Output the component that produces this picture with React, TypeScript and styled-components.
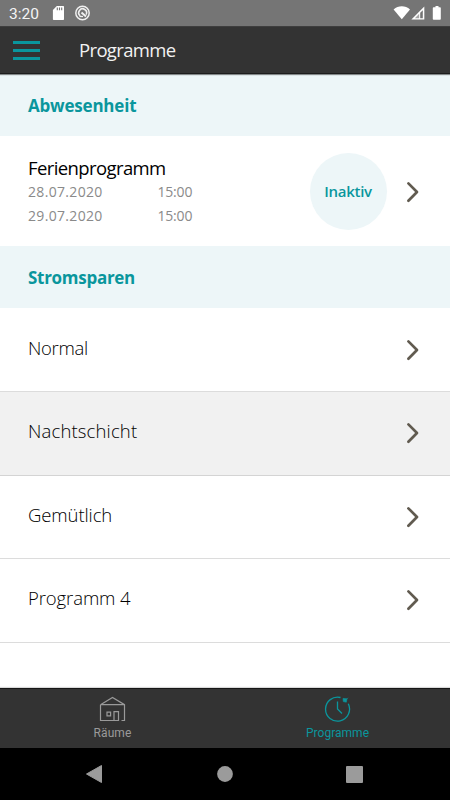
import React from "react";
import styled, { createGlobalStyle } from "styled-components";

const GlobalStyle = createGlobalStyle`
  * { box-sizing: border-box; }
  body { margin: 0; background: #fff; }
`;

const TEAL = "#0a969d";

const Screen = styled.div`
  width: 450px;
  height: 800px;
  display: flex;
  flex-direction: column;
  overflow: hidden;
  background: #fff;
  font-family: "Open Sans", "Noto Sans", sans-serif;
`;

const StatusBar = styled.div`
  flex: none;
  height: 26px;
  padding: 0 8px 0 9px;
  display: flex;
  align-items: center;
  justify-content: space-between;
  background: #757575;
`;

const StatusGroup = styled.div`
  display: flex;
  align-items: center;
  height: 26px;
`;

const Clock = styled.span`
  width: 43px;
  font: 400 15.5px/26px Roboto, sans-serif;
  padding-top: 1px;
  color: #f4f4f4;
`;

const Header = styled.header`
  flex: none;
  height: 48px;
  padding-left: 13px;
  display: flex;
  align-items: center;
  background: #333;
  border-top: 1px solid #3e3e3e;
  border-bottom: 1px solid #1d1d1d;
  box-shadow: 0 1px 1px rgba(0, 0, 0, 0.45);
  z-index: 1;
`;

const MenuButton = styled.button`
  width: 27px;
  height: 19px;
  margin: 1px 39px 0 0;
  padding: 0;
  border: 0;
  background: none;
  display: flex;
  flex-direction: column;
  justify-content: space-between;
`;

const MenuLine = styled.span`
  width: 27px;
  height: 3px;
  background: ${TEAL};
`;

const Label = styled.span<{ $size: number; $spacing: number; $weight?: number; $color?: string }>`
  display: block;
  white-space: nowrap;
  line-height: 24px;
  font-size: ${(p) => p.$size}px;
  letter-spacing: ${(p) => p.$spacing}px;
  font-weight: ${(p) => p.$weight ?? 400};
  color: ${(p) => p.$color ?? "#000"};
`;

const SectionHeader = styled.h2`
  flex: none;
  height: 62px;
  margin: 0;
  padding: 1px 28px 0;
  display: flex;
  align-items: center;
  background: #edf6f8;
`;

const HolidayRow = styled.div`
  flex: none;
  height: 110px;
  padding: 0 30px 0 28px;
  display: flex;
  align-items: center;
`;

const HolidayInfo = styled.div`
  width: 281.5px;
  margin-top: 2px;
`;

const DateLine = styled.div`
  display: grid;
  grid-template-columns: 129.5px auto;
`;

const StatusBubble = styled.div`
  width: 77px;
  height: 77px;
  border-radius: 50%;
  display: flex;
  align-items: center;
  justify-content: center;
  background: #edf6f8;
`;

const ProgramRow = styled.div<{ $height: number; $selected?: boolean }>`
  flex: none;
  height: ${(p) => p.$height}px;
  padding: 0 30px 0 28px;
  display: flex;
  align-items: center;
  justify-content: space-between;
  border-bottom: 1px solid ${(p) => (p.$selected ? "#d4d4d4" : "#dcdcdc")};
  background: ${(p) => (p.$selected ? "#f1f1f1" : "#fff")};
  > span { margin-top: -3px; }
  & + & { padding-bottom: 2px; }
`;

const ChevronIcon = styled.svg`
  flex: none;
  margin: 1px 0 0 auto;
`;

const TabBar = styled.nav`
  flex: none;
  height: 60px;
  margin-top: auto;
  display: grid;
  grid-template-columns: 1fr 1fr;
  background: #333;
  border-top: 1px solid #161616;
  box-shadow: 0 -1px 1px rgba(0, 0, 0, 0.15);
`;

const Tab = styled.div<{ $active?: boolean }>`
  display: flex;
  flex-direction: column;
  align-items: center;
  padding-top: 6px;
  color: ${(p) => (p.$active ? TEAL : "#9a9a9a")};
  font: 400 12px/16px Roboto, sans-serif;
  letter-spacing: ${(p) => (p.$active ? 0.03 : 0.1)}px;
  svg { margin-bottom: 2px; }
`;

const SystemNav = styled.div`
  flex: none;
  height: 52px;
  padding: 0 87px 0 85px;
  display: flex;
  align-items: center;
  justify-content: space-between;
  background: #000;
`;

const Chevron = () => (
  <ChevronIcon width="15" height="24" viewBox="0 0 15 24" fill="none">
    <path d="M3.4 3.4 12 12l-8.6 8.7" stroke="#615b50" strokeWidth="2.7" strokeLinecap="round" strokeLinejoin="round" />
  </ChevronIcon>
);

const programs = [
  { name: "Normal", height: 84, spacing: -0.3 },
  { name: "Nachtschicht", height: 84, spacing: 0.15, selected: true },
  { name: "Gemütlich", height: 83, spacing: -0.1 },
  { name: "Programm 4", height: 84, spacing: -0.1 },
];

export default function App() {
  return (
    <Screen>
      <GlobalStyle />
      <StatusBar>
        <StatusGroup>
          <Clock>3:20</Clock>
          <svg width="38" height="16" viewBox="0 0 38 16">
            <path d="M4.8 1H11c.6 0 1 .4 1 1v12c0 .6-.4 1-1 1H1.9c-.6 0-1-.4-1-1V5z" fill="#fff" />
            <path d="M5.3 2.5v2.7M7.5 2.5v2.7M9.7 2.5v2.7" stroke="#757575" strokeWidth="1.1" />
            <circle cx="30.5" cy="8" r="6.7" fill="none" stroke="#f0f0f0" strokeWidth="1.5" />
            <path d="M28.2 10.8a3.900 3.900 0 1 1 5.900-1.200" fill="none" stroke="#f0f0f0" strokeWidth="1.6" />
            <path d="m29.5 7.500 4.500 4" stroke="#f0f0f0" strokeWidth="2" />
            <path d="M27.500 11.500h3.500" stroke="#f0f0f0" strokeWidth="1.300" />
          </svg>
        </StatusGroup>
        <svg width="50" height="16" viewBox="0 0 50 16">
          <path d="M1.6 4.5c4.6-4.3 11.8-4.3 16.4 0L9.8 14.3z" fill="#fff" />
          <path d="M32.3 1.6v13H19.4z" fill="#fff" />
          <path d="M30.8 5.2v8h-2.6v-5.4z" fill="#757575" />
          <path d="M27.2 8.8v4.4h-4.3z" fill="#a5a5a5" />
          <path d="M43.5 1h3v1.3H48c.5 0 .8.3.8.8V14c0 .5-.3.8-.8.8h-6.400c-.5 0-.8-.3-.8-.8V3.100c0-.5.3-.8.8-.8h1.900z" fill="#fff" />
        </svg>
      </StatusBar>
      <Header>
        <MenuButton aria-label="Menü">
          <MenuLine />
          <MenuLine />
          <MenuLine />
        </MenuButton>
        <Label $size={18.5} $spacing={-0.65} $color="#f2f2f2">Programme</Label>
      </Header>
      <SectionHeader>
        <Label $size={17} $spacing={-0.2} $weight={700} $color={TEAL}>Abwesenheit</Label>
      </SectionHeader>
      <HolidayRow>
        <HolidayInfo>
          <Label $size={18.5} $spacing={-0.6}>Ferienprogramm</Label>
          <DateLine>
            <Label $size={14} $spacing={0.33} $color="#8a8a8a">28.07.2020</Label>
            <Label $size={14} $spacing={-0.2} $color="#8a8a8a">15:00</Label>
          </DateLine>
          <DateLine>
            <Label $size={14} $spacing={0.33} $color="#8a8a8a">29.07.2020</Label>
            <Label $size={14} $spacing={-0.2} $color="#8a8a8a">15:00</Label>
          </DateLine>
        </HolidayInfo>
        <StatusBubble>
          <Label $size={15} $spacing={-0.28} $weight={600} $color={TEAL}>Inaktiv</Label>
        </StatusBubble>
        <Chevron />
      </HolidayRow>
      <SectionHeader>
        <Label $size={17} $spacing={-0.28} $weight={700} $color={TEAL}>Stromsparen</Label>
      </SectionHeader>
      {programs.map((p) => (
        <ProgramRow key={p.name} $height={p.height} $selected={p.selected}>
          <Label $size={18.5} $spacing={p.spacing} $weight={300}>{p.name}</Label>
          <Chevron />
        </ProgramRow>
      ))}
      <TabBar>
        <Tab>
          <svg width="28" height="28" viewBox="0 0 28 28" fill="none" stroke="#9a9a9a" strokeWidth="1.2">
            <path d="M1.500 9.700 13.500 2.500 25.500 9.700v15.800h-3M1.500 9.700h24M1.500 9.700v15.800h18v-8.800h-4.500v8.800" />
            <path d="M8 17.200h3.600v3.600H8z" />
          </svg>
          Räume
        </Tab>
        <Tab $active>
          <svg width="28" height="28" viewBox="0 0 28 28" fill="none" stroke={TEAL} strokeWidth="1.3">
            <path d="M16.500 2.500A12 12 0 1 0 24.300 8.800" />
            <path d="M13.500 6.500v7.500l4.500 4.500" />
            <path d="M19 3.400 23 3.800 22.300 7.200 19.300 6.600zM22.500 4.400l1.700-1.600" fill={TEAL} strokeWidth="0.600" />
          </svg>
          Programme
        </Tab>
      </TabBar>
      <SystemNav>
        <svg width="18" height="18" viewBox="0 0 18 18"><path d="M1.500 9 16.500.5v17z" fill="#9b9b9b" stroke="#9b9b9b" strokeLinejoin="round" /></svg>
        <svg width="16" height="16" viewBox="0 0 16 16"><circle cx="8" cy="8" r="7.900" fill="#9b9b9b" /></svg>
        <svg width="17" height="17" viewBox="0 0 17 17"><rect width="17" height="17" rx="1" fill="#9b9b9b" /></svg>
      </SystemNav>
    </Screen>
  );
}
